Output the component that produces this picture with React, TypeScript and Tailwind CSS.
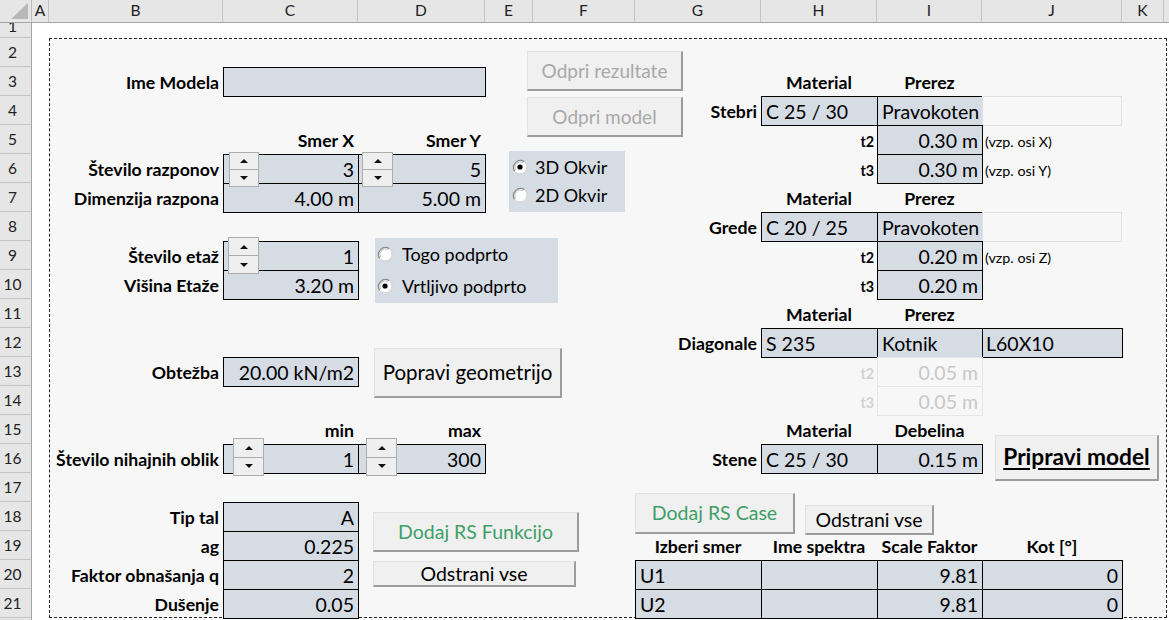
import React from 'react';

type P = { p: string; children?: React.ReactNode };

const cols: [string, number][] = [
  ['A', 17], ['B', 174], ['C', 135], ['D', 127], ['E', 48], ['F', 102],
  ['G', 126], ['H', 116], ['I', 105], ['J', 140], ['K', 42],
];

const lbl = 'flex items-end justify-end whitespace-nowrap pb-[4px] pr-[4px] text-[17.7px] font-bold leading-none';
const head = 'flex items-end justify-center whitespace-nowrap pb-[4px] text-[17.7px] font-bold leading-none';
const cell = 'flex items-end whitespace-nowrap pb-[4px] text-[19.5px] leading-none -mr-px -mb-px border';
const small = 'flex items-end whitespace-nowrap pb-[5px] text-[14.3px] leading-none';

function Lbl({ p, children }: P) {
  return <div className={`${p} ${lbl}`}>{children}</div>;
}
function Head({ p, children }: P) {
  return <div className={`${p} ${head}`}>{children}</div>;
}
// value cell, number aligned right
function Num({ p, children }: P) {
  return <div className={`${p} ${cell} justify-end pr-[4px] bg-[#d6dce4] border-black`}>{children}</div>;
}
// value cell, text aligned left
function Txt({ p, children }: P) {
  return <div className={`${p} ${cell} justify-start pl-[4px] bg-[#d6dce4] border-black`}>{children}</div>;
}
function T({ p, children }: P) {
  return <div className={`${p} ${small} justify-end pr-[3px] font-bold`}>{children}</div>;
}
function Note({ p, children }: P) {
  return <div className={`${p} ${small} justify-start pl-[3px]`}>{children}</div>;
}

function Btn({ p, children }: P) {
  return (
    <div
      className={`absolute flex items-center justify-center whitespace-nowrap leading-none bg-[#f0f0f0] border border-[#e2e2e2] border-r-2 border-b-2 border-r-[#9c9c9c] border-b-[#9c9c9c] ${p}`}
    >
      {children}
    </div>
  );
}

function Spin({ p }: { p: string }) {
  return (
    <div className={`absolute flex flex-col ${p}`}>
      <div className="flex flex-1 items-center justify-center bg-[#efefef] border border-[#adadad]">
        <svg width="8" height="4" viewBox="0 0 8 4">
          <path d="M0 4 L4 0 L8 4 Z" fill="#111" />
        </svg>
      </div>
      <div className="-mt-px flex flex-1 items-center justify-center bg-[#efefef] border border-[#adadad]">
        <svg width="8" height="4" viewBox="0 0 8 4">
          <path d="M0 0 L4 4 L8 0 Z" fill="#111" />
        </svg>
      </div>
    </div>
  );
}

function Radio({ on }: { on?: boolean }) {
  return (
    <svg width="16" height="16" viewBox="0 0 16 16" className="shrink-0">
      <circle cx="8" cy="8" r="7" fill="#fff" stroke="#d0d0d0" />
      <path d="M2.6 12.2 A7 7 0 0 1 12.2 2.6" fill="none" stroke="#8a8a8a" strokeWidth="1.3" />
      <path d="M3.6 11.2 A5.6 5.6 0 0 1 11.2 3.6" fill="none" stroke="#c4c4c4" strokeWidth="1" />
      {on && <circle cx="8" cy="8" r="2.6" fill="#000" />}
    </svg>
  );
}

export default function App() {
  const rows = Array.from({ length: 20 }, (_, i) => i + 2);

  return (
    <div className="w-[1169px] h-[620px] overflow-hidden bg-white text-black font-[family-name:Lato,'Liberation_Sans',sans-serif]">
      {/* column headers */}
      <div className="flex h-[23px] bg-[#e6e6e6] border-b border-[#a6a6a6] text-[15.5px] text-[#222]">
        <div className="w-[32px] shrink-0 border-r border-[#bdbdbd]">
          <svg width="31" height="22" viewBox="0 0 31 22">
            <polygon points="28,3 28,19 11,19" fill="#b8b8b8" />
          </svg>
        </div>
        {cols.map(([c, w]) => (
          <div
            key={c}
            style={{ width: w }}
            className="shrink-0 flex items-center justify-center border-r border-[#c4c4c4]"
          >
            {c}
          </div>
        ))}
        <div className="flex-1" />
      </div>

      <div className="flex h-[597px]">
        {/* row headers */}
        <div className="w-[32px] shrink-0 flex flex-col bg-[#e6e6e6] border-r border-[#a6a6a6] text-[15.5px] text-[#222]">
          <div className="h-[15px] overflow-hidden border-b border-[#c4c4c4] text-center pr-[6px] leading-none">
            <div className="-mt-[4px]">1</div>
          </div>
          {rows.map((r) => (
            <div
              key={r}
              className="h-[29px] shrink-0 flex items-center justify-center pr-[6px] pt-[2px] border-b border-[#c4c4c4]"
            >
              {r}
            </div>
          ))}
        </div>

        {/* sheet */}
        <div className="relative flex-1 grid grid-cols-[17px_174px_135px_127px_48px_102px_126px_116px_105px_140px_42px_1fr] grid-rows-[15px_repeat(20,29px)_1fr]">
          {/* print area */}
          <div className="col-start-2 col-end-13 row-start-2 row-end-22 mr-[2px] bg-[#f7f7f7] border border-dashed border-[#222]" />

          {/* row 3 */}
          <Lbl p="col-start-2 row-start-3">Ime Modela</Lbl>
          <div className="col-start-3 col-span-2 row-start-3 -mr-px -mb-px bg-[#d6dce4] border border-black" />
          <Head p="col-start-8 row-start-3">Material</Head>
          <Head p="col-start-9 row-start-3">Prerez</Head>

          {/* row 4 */}
          <Lbl p="col-start-7 row-start-4">Stebri</Lbl>
          <Txt p="col-start-8 row-start-4">C 25 / 30</Txt>
          <Txt p="col-start-9 row-start-4">Pravokoten</Txt>
          <div className="col-start-10 row-start-4 -mb-px border border-[#e0e0e0]" />

          {/* row 5 */}
          <Lbl p="col-start-3 row-start-5">Smer X</Lbl>
          <Lbl p="col-start-4 row-start-5">Smer Y</Lbl>
          <T p="col-start-8 row-start-5">t2</T>
          <Num p="col-start-9 row-start-5">0.30 m</Num>
          <Note p="col-start-10 row-start-5">(vzp. osi X)</Note>

          {/* row 6 */}
          <Lbl p="col-start-2 row-start-6">Število razponov</Lbl>
          <Num p="col-start-3 row-start-6">3</Num>
          <Num p="col-start-4 row-start-6">5</Num>
          <T p="col-start-8 row-start-6">t3</T>
          <Num p="col-start-9 row-start-6">0.30 m</Num>
          <Note p="col-start-10 row-start-6">(vzp. osi Y)</Note>

          {/* row 7 */}
          <Lbl p="col-start-2 row-start-7">Dimenzija razpona</Lbl>
          <Num p="col-start-3 row-start-7">4.00 m</Num>
          <Num p="col-start-4 row-start-7">5.00 m</Num>
          <Head p="col-start-8 row-start-7">Material</Head>
          <Head p="col-start-9 row-start-7">Prerez</Head>

          {/* row 8 */}
          <Lbl p="col-start-7 row-start-8">Grede</Lbl>
          <Txt p="col-start-8 row-start-8">C 20 / 25</Txt>
          <Txt p="col-start-9 row-start-8">Pravokoten</Txt>
          <div className="col-start-10 row-start-8 -mb-px border border-[#e0e0e0]" />

          {/* row 9 */}
          <Lbl p="col-start-2 row-start-9">Število etaž</Lbl>
          <Num p="col-start-3 row-start-9">1</Num>
          <T p="col-start-8 row-start-9">t2</T>
          <Num p="col-start-9 row-start-9">0.20 m</Num>
          <Note p="col-start-10 row-start-9">(vzp. osi Z)</Note>

          {/* row 10 */}
          <Lbl p="col-start-2 row-start-10">Višina Etaže</Lbl>
          <Num p="col-start-3 row-start-10">3.20 m</Num>
          <T p="col-start-8 row-start-10">t3</T>
          <Num p="col-start-9 row-start-10">0.20 m</Num>

          {/* row 11 */}
          <Head p="col-start-8 row-start-11">Material</Head>
          <Head p="col-start-9 row-start-11">Prerez</Head>

          {/* row 12 */}
          <Lbl p="col-start-7 row-start-12">Diagonale</Lbl>
          <Txt p="col-start-8 row-start-12">S 235</Txt>
          <Txt p="col-start-9 row-start-12">Kotnik</Txt>
          <div className={`col-start-10 row-start-12 ${cell} justify-start pl-[3px] text-[16px] bg-[#d6dce4] border-black`}>
            L60X10
          </div>

          {/* row 13 */}
          <Lbl p="col-start-2 row-start-13">Obtežba</Lbl>
          <Num p="col-start-3 row-start-13">20.00 kN/m2</Num>
          <div className={`col-start-8 row-start-13 ${small} justify-end pr-[3px] font-bold text-[#d2d2d2]`}>t2</div>
          <div className={`col-start-9 row-start-13 ${cell} justify-end pr-[4px] border-[#e6e6e6] text-[#c8c8c8]`}>0.05 m</div>

          {/* row 14 */}
          <div className={`col-start-8 row-start-14 ${small} justify-end pr-[3px] font-bold text-[#d2d2d2]`}>t3</div>
          <div className={`col-start-9 row-start-14 ${cell} justify-end pr-[4px] border-[#e6e6e6] text-[#c8c8c8]`}>0.05 m</div>

          {/* row 15 */}
          <Lbl p="col-start-3 row-start-15">min</Lbl>
          <Lbl p="col-start-4 row-start-15">max</Lbl>
          <Head p="col-start-8 row-start-15">Material</Head>
          <Head p="col-start-9 row-start-15">Debelina</Head>

          {/* row 16 */}
          <Lbl p="col-start-2 row-start-16">Število nihajnih oblik</Lbl>
          <Num p="col-start-3 row-start-16">1</Num>
          <Num p="col-start-4 row-start-16">300</Num>
          <Lbl p="col-start-7 row-start-16">Stene</Lbl>
          <Txt p="col-start-8 row-start-16">C 25 / 30</Txt>
          <Num p="col-start-9 row-start-16">0.15 m</Num>

          {/* rows 18-21 */}
          <Lbl p="col-start-2 row-start-18">Tip tal</Lbl>
          <Num p="col-start-3 row-start-18">A</Num>
          <Lbl p="col-start-2 row-start-19">ag</Lbl>
          <Num p="col-start-3 row-start-19">0.225</Num>
          <Head p="col-start-7 row-start-19">Izberi smer</Head>
          <Head p="col-start-8 row-start-19">Ime spektra</Head>
          <Head p="col-start-9 row-start-19">Scale Faktor</Head>
          <Head p="col-start-10 row-start-19">Kot [°]</Head>
          <Lbl p="col-start-2 row-start-20">Faktor obnašanja q</Lbl>
          <Num p="col-start-3 row-start-20">2</Num>
          <Txt p="col-start-7 row-start-20">U1</Txt>
          <Txt p="col-start-8 row-start-20"></Txt>
          <Num p="col-start-9 row-start-20">9.81</Num>
          <Num p="col-start-10 row-start-20">0</Num>
          <Lbl p="col-start-2 row-start-21">Dušenje</Lbl>
          <Num p="col-start-3 row-start-21">0.05</Num>
          <Txt p="col-start-7 row-start-21">U2</Txt>
          <Txt p="col-start-8 row-start-21"></Txt>
          <Num p="col-start-9 row-start-21">9.81</Num>
          <Num p="col-start-10 row-start-21">0</Num>

          {/* floating controls */}
          <Btn p="left-[495px] top-[28px] w-[156px] h-[40px] text-[19px] text-[#a8a8a8]">Odpri rezultate</Btn>
          <Btn p="left-[495px] top-[74px] w-[156px] h-[40px] text-[19px] text-[#a8a8a8]">Odpri model</Btn>
          <Btn p="left-[342px] top-[325px] w-[188px] h-[50px] text-[20.5px]">Popravi geometrijo</Btn>
          <Btn p="left-[963px] top-[412px] w-[164px] h-[46px] text-[22.7px] font-bold underline underline-offset-[3px]">Pripravi model</Btn>
          <Btn p="left-[603px] top-[470px] w-[160px] h-[41px] text-[19.5px] text-[#3f9f68]">Dodaj RS Case</Btn>
          <Btn p="left-[773px] top-[482px] w-[129px] h-[30px] text-[19.5px]">Odstrani vse</Btn>
          <Btn p="left-[341px] top-[489px] w-[206px] h-[40px] text-[19.5px] text-[#3f9f68]">Dodaj RS Funkcijo</Btn>
          <Btn p="left-[341px] top-[538px] w-[203px] h-[26px] text-[19.5px]">Odstrani vse</Btn>

          <Spin p="left-[197px] top-[129px] w-[30px] h-[35px]" />
          <Spin p="left-[330px] top-[129px] w-[31px] h-[35px]" />
          <Spin p="left-[196px] top-[214px] w-[31px] h-[37px]" />
          <Spin p="left-[201px] top-[415px] w-[31px] h-[38px]" />
          <Spin p="left-[334px] top-[415px] w-[31px] h-[38px]" />

          <div className="absolute left-[477px] top-[128px] w-[116px] h-[61px] flex flex-col pt-[2px] pl-[3px] bg-[#d6dce4] text-[18px] leading-none">
            <div className="h-[28px] flex items-center gap-[7px]">
              <Radio on />
              <span>3D Okvir</span>
            </div>
            <div className="h-[28px] flex items-center gap-[7px]">
              <Radio />
              <span>2D Okvir</span>
            </div>
          </div>

          <div className="absolute left-[343px] top-[215px] w-[183px] h-[65px] flex flex-col pl-[2px] bg-[#d6dce4] text-[18px] leading-none">
            <div className="h-[32px] flex items-center gap-[9px]">
              <Radio />
              <span>Togo podprto</span>
            </div>
            <div className="h-[32px] flex items-center gap-[9px]">
              <Radio on />
              <span>Vrtljivo podprto</span>
            </div>
          </div>
        </div>
      </div>
    </div>
  );
}
